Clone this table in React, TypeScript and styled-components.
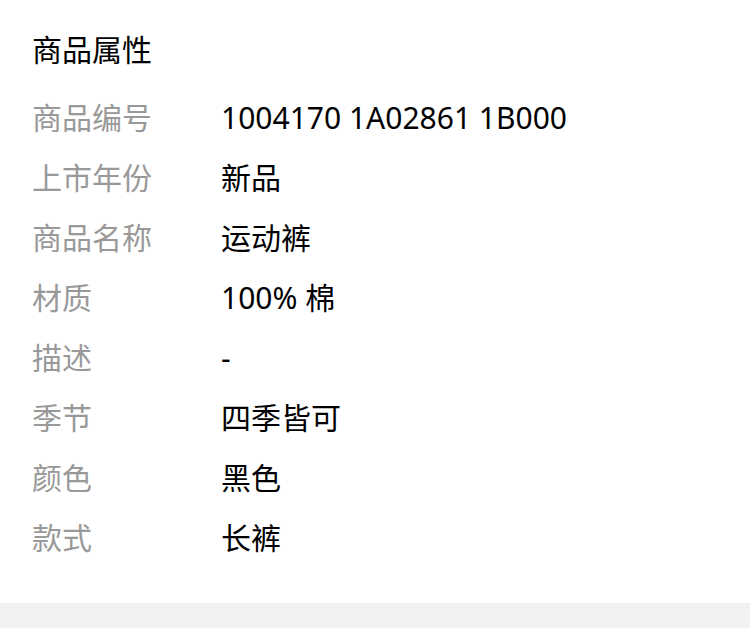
import styled, { createGlobalStyle } from 'styled-components';

const GlobalStyle = createGlobalStyle`
    html, body {
        margin: 0;
        padding: 0;
        background-color: #f2f2f2;
    }
    body {
        font-family: "Noto Sans", "Noto Sans CJK SC", sans-serif;
    }
`;

export const Panel = styled.div`
    background-color: #ffffff;
    padding: 20px 0 35px 32px;
`;

export const Title = styled.div`
    height: 60px;
    line-height: 60px;
    font-size: 30px;
    color: #000000;
    margin-bottom: 8px;
`;

export const AttrList = styled.div`
    display: flex;
    flex-direction: column;
`;

export const AttrRow = styled.div`
    display: grid;
    grid-template-columns: 189px 1fr;
    height: 60px;
    line-height: 60px;
    font-size: 30px;
`;

export const AttrLabel = styled.span`
    color: #999999;
`;

export const AttrValue = styled.span`
    color: #000000;
`;

export const Bottom = styled.div`
    height: 25px;
    background-color: #f2f2f2;
`;

const attrs: [string, string][] = [
    ['商品编号', '1004170 1A02861 1B000'],
    ['上市年份', '新品'],
    ['商品名称', '运动裤'],
    ['材质', '100% 棉'],
    ['描述', '-'],
    ['季节', '四季皆可'],
    ['颜色', '黑色'],
    ['款式', '长裤'],
];

export default function App() {
    return (
        <>
            <GlobalStyle />
            <Panel>
                <Title>商品属性</Title>
                <AttrList>
                    {attrs.map(([label, value]) => (
                        <AttrRow key={label}>
                            <AttrLabel>{label}</AttrLabel>
                            <AttrValue>{value}</AttrValue>
                        </AttrRow>
                    ))}
                </AttrList>
            </Panel>
            <Bottom />
        </>
    );
}
